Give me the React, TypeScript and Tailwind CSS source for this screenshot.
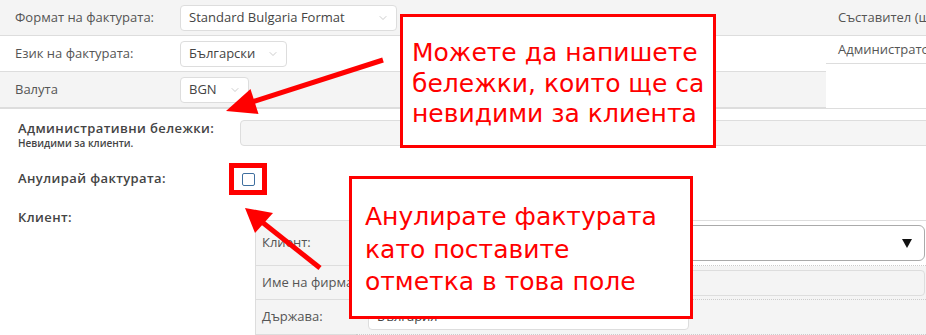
import React from 'react';
import { ChevronDown } from 'lucide-react';

const Select: React.FC<{ value: string; className?: string }> = ({ value, className = '' }) => (
  <div className={`h-[26px] flex items-center gap-3 pl-2 pr-[7px] bg-white border border-[#ddd] rounded-[4px] text-[13px] text-[#444] ${className}`}>
    <span className="whitespace-nowrap">{value}</span>
    <ChevronDown size={12} strokeWidth={1} className="text-[#999] ml-auto" />
  </div>
);

const TopRow: React.FC<{ label: string; grey?: boolean; last?: boolean; children: React.ReactNode }> = ({ label, grey, last, children }) => (
  <div className={`flex items-center ${last ? 'h-[37px] border-b-2' : 'h-[36px] border-b'} border-[#ddd] ${grey ? 'bg-[#f4f4f4]' : 'bg-white'}`}>
    <div className="w-[180px] pl-[15px] text-[13px] text-[#555]">{label}</div>
    {children}
  </div>
);

const Callout: React.FC<{ lines: string[]; className: string }> = ({ lines, className }) => (
  <div className={`absolute bg-white border-[3px] border-[#ff0000] text-[#ff0000] text-[25px] font-['DejaVu_Sans',sans-serif] whitespace-nowrap ${className}`}>
    {lines.map((l, i) => (
      <div key={i}>{l}</div>
    ))}
  </div>
);

export default function App() {
  return (
    <div className="relative w-[926px] h-[335px] overflow-hidden bg-white font-['Open_Sans',sans-serif]">
      {/* invoice settings */}
      <div className="flex">
        <div className="w-[826px] shrink-0">
          <TopRow label="Формат на фактурата:" grey>
            <Select value="Standard Bulgaria Format" className="w-[217px]" />
          </TopRow>
          <TopRow label="Език на фактурата:">
            <Select value="Български" />
          </TopRow>
          <TopRow label="Валута" grey last>
            <Select value="BGN" />
          </TopRow>
        </div>
        <div className="flex-1 min-w-0 flex flex-col text-[13px] text-[#555] whitespace-nowrap overflow-hidden">
          <div className="h-[36px] bg-[#f4f4f4] border-b border-[#ddd] flex items-center pl-3">Съставител (шаблон)</div>
          <div className="h-[28px] border-b border-[#ddd] flex items-center pl-3">Администратор</div>
          <div className="flex-1 border-b border-[#ddd]"></div>
        </div>
      </div>

      {/* notes / cancel / client */}
      <div className="pl-[18px] pt-[10px] text-[#444]">
        <div className="flex">
          <div className="w-[222px]">
            <div className="text-[13px] leading-[18px] font-semibold tracking-[0.4px]">Административни бележки:</div>
            <div className="text-[10px] leading-[12px] font-semibold">Невидими за клиенти.</div>
          </div>
          <div className="flex-1 h-[26px] mt-[1px] bg-[#f5f5f5] border border-[#ddd] rounded-[4px] -mr-2"></div>
        </div>

        <div className="flex items-center mt-[14px]">
          <div className="w-[211px] text-[13px] font-semibold tracking-[0.4px]">Анулирай фактурата:</div>
          <div className="w-[38px] h-[32px] border-[5px] border-[#ff0000] flex items-center justify-center bg-white">
            <div className="w-[13px] h-[13px] border border-[#3f6f9f] rounded-[2px] bg-white"></div>
          </div>
        </div>

        <div className="flex items-start mt-[13px]">
          <div className="w-[237px] text-[13px] leading-[18px] font-semibold tracking-[0.4px]">Клиент:</div>
          <div className="flex-1 mt-[12px] border-t border-l border-[#ddd] text-[13px] text-[#555]">
            <div className="flex h-[45px]">
              <div className="w-[100px] bg-[#f4f4f4] border-b border-[#ddd] flex items-center pl-[6px]">Клиент:</div>
              <div className="flex-1 border-b border-dotted border-[#ccc] pl-[5px] pr-[1px] flex items-center">
                <div className="w-full h-[36px] border border-[#aaa] rounded-[6px] bg-white flex items-center justify-end pr-[12px]">
                  <svg width="10" height="9" viewBox="0 0 10 9">
                    <polygon points="0,0 10,0 5,9" fill="#111" />
                  </svg>
                </div>
              </div>
            </div>
            <div className="flex h-[34px] bg-[#f4f4f4]">
              <div className="w-[100px] border-b border-[#ddd] flex items-center pl-[6px] whitespace-nowrap">Име на фирма:</div>
              <div className="flex-1 border-b border-dotted border-[#ccc] pl-[5px] pr-[1px] flex items-center">
                <div className="w-full h-[26px] border border-[#ddd] rounded-[4px] bg-[#f4f4f4]"></div>
              </div>
            </div>
            <div className="flex h-[35px] bg-[#f4f4f4]">
              <div className="w-[100px] border-b border-[#ddd] flex items-center pl-[6px]">Държава:</div>
              <div className="flex-1 border-b border-dotted border-[#ccc] pl-[12px] flex items-center">
                <div className="w-[321px] h-[26px] border border-[#ddd] rounded-[4px] bg-white flex items-center pl-2 text-[#444]">България</div>
              </div>
            </div>
          </div>
        </div>
      </div>

      {/* annotations */}
      <Callout
        lines={['Можете да напишете', 'бележки, които ще са', 'невидими за клиента']}
        className="left-[400px] top-[14px] w-[316px] h-[134px] pl-[9px] pt-[21px] leading-[30.5px]"
      />
      <Callout
        lines={['Анулирате фактурата', 'като поставите', 'отметка в това поле']}
        className="left-[349px] top-[176px] w-[344px] h-[143px] pl-[13px] pt-[22px] leading-[32.5px]"
      />
      <svg className="absolute inset-0 pointer-events-none" width="926" height="335">
        <line x1="383" y1="60" x2="252" y2="102" stroke="#ff0000" strokeWidth="5" />
        <polygon points="226,111 258.5,114 250.5,89" fill="#ff0000" />
        <line x1="320" y1="268" x2="262" y2="222" stroke="#ff0000" strokeWidth="5" />
        <polygon points="245,208 273,213 255,233" fill="#ff0000" />
      </svg>
    </div>
  );
}
